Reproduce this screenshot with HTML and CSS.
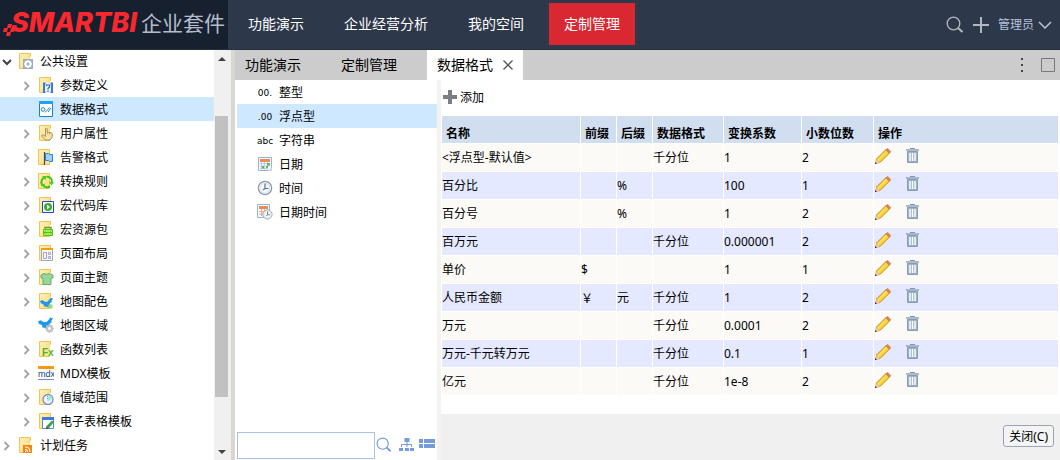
FILE: index.html
```html
<!DOCTYPE html>
<html lang="zh-CN">
<head>
<meta charset="utf-8">
<title>数据格式</title>
<link rel="stylesheet" href="styles.css">
</head>
<body>
<svg class="sprite" aria-hidden="true">
  <defs>
    <linearGradient id="paper" x1="0" y1="0" x2="1" y2="1"><stop offset="0" stop-color="#fff0b8"/><stop offset="1" stop-color="#ffdc7c"/></linearGradient>
    <symbol id="folder" viewBox="0 0 16 16"><path d="M1.5.5h11v3h-1v12h-10z" fill="url(#paper)" stroke="#ecc755"/><path d="M10 1h2v14h-2z" fill="#ffe08a"/></symbol>
    <symbol id="right" viewBox="0 0 10 10"><path d="M2.5 1l4 4-4 4" fill="none" stroke="#a3a3a3" stroke-width="1.8"/></symbol>
    <symbol id="down" viewBox="0 0 10 10"><path d="M1 3l4 4 4-4" fill="none" stroke="#404040" stroke-width="2"/></symbol>
    <symbol id="settings" viewBox="0 0 16 16"><use href="#folder"/><path d="M5 6h10v10H5z" fill="#9aaec6"/><circle cx="10" cy="11" r="2.5" fill="none" stroke="#fff" stroke-width="2"/><path d="M10 7v1.5M10 13.500V15M6 11h1.500M12.500 11H14M7.200 8.200l1 1M11.800 12.800l1 1M12.800 8.200l-1 1M8.200 12.800l-1 1" stroke="#fff" stroke-width="1.500"/></symbol>
    <symbol id="param" viewBox="0 0 16 16"><use href="#folder"/><path d="M5 6h10v10H5z" fill="#e9f1fb"/><path d="M7.500 6.500H6v9h1.500M12.500 6.500H14v9h-1.500" fill="none" stroke="#3b7bdd" stroke-width="2"/><path d="M8.500 9V8h3v2L10 11.500v1M10 13.500V15" fill="none" stroke="#2c62c4" stroke-width="1.200"/></symbol>
    <symbol id="format" viewBox="0 0 16 16"><path d="M1.500.5h13v15h-13z" fill="#fff" stroke="#0d87d4"/><path d="M1 0h14v3H1z" fill="#21a2ee"/><circle cx="5" cy="8.500" r="1.800" fill="none" stroke="#287fba"/><path d="M7 11.500l4.500-5M10 11l3-4" stroke="#287fba" fill="none"/></symbol>
    <symbol id="hand" viewBox="0 0 16 16"><use href="#folder"/><path d="M7.500 10V3.500q1-1 1.700 0V7l4 .8q1.500.5 1.200 2.200l-.6 3-1.800 2H7.500L3.500 11q.3-1.700 2-1l2 1.500z" fill="#f6e2ae" stroke="#ad9354"/><path d="M9.500 7v2M11.500 7.500v2" stroke="#ad9354" stroke-width=".7"/></symbol>
    <symbol id="flag" viewBox="0 0 16 16"><path d="M.5.500h11v15H.5z" fill="url(#paper)" stroke="#ecc755"/><path d="M6.500 3v13" stroke="#4c4646" stroke-width="1.200"/><path d="M7.500 4.500h3l1 1h3v7h-3l-1-1h-3z" fill="#a0d2ff" stroke="#2482ed"/></symbol>
    <symbol id="convert" viewBox="0 0 16 16"><path d="M.5.500h11v15H.5z" fill="url(#paper)" stroke="#ecc755"/><path d="M4.500 12.500Q1.500 8 6 4.500M9 3.500Q15 5 13.500 9.500M12 13Q9.500 15.500 6.500 13.500" fill="none" stroke="#3fc21b" stroke-width="2"/><path d="M4 3h5L7.500 7zM11 9h5l-2.500 3.500zM7 10.500V15l-4-2.500z" fill="#4ace20"/></symbol>
    <symbol id="code" viewBox="0 0 16 16"><use href="#folder"/><path d="M4.500 4.500h11v11h-11z" fill="#fff" stroke="#2545d4"/><circle cx="10" cy="10" r="4" fill="#37ad2f"/><path d="M9 7.500L12 10l-3 2.500z" fill="#fff"/></symbol>
    <symbol id="bag" viewBox="0 0 16 16"><use href="#folder"/><path d="M7 8.500V6.500h6v2" fill="none" stroke="#58a61f" stroke-width="1.300"/><path d="M5.500 8.500h9v6h-9z" fill="#9bf254" stroke="#5dbb20"/><path d="M5 11.500h10M7.500 10.500v2M12.500 10.500v2" stroke="#5dbb20"/></symbol>
    <symbol id="layout" viewBox="0 0 16 16"><use href="#folder"/><path d="M3.500 3.500h11v12h-11z" fill="#f7f8fc" stroke="#99a8c2"/><path d="M3 3h12v2H3z" fill="#ff9c14"/><path d="M5.500 7.500h3v6h-3zM10.500 7.500h2v2h-2zM10.500 11.500h2v2h-2z" fill="none" stroke="#a7a2c4"/></symbol>
    <symbol id="shirt" viewBox="0 0 16 16"><use href="#folder"/><path d="M3 6l3-1.500q3 1.500 5 0L15 6v3h-2v6.500H5V9H3z" fill="#98d49b" stroke="#62af70"/></symbol>
    <symbol id="china" viewBox="0 0 16 12"><path d="M0 4l3-1 3 2h3l2-2 2-3 3 1-2 3 1 1-3 2 1 3-3 2-3-1H5L4 8 1 7z" fill="#2298ea"/></symbol>
    <symbol id="mapcolor" viewBox="0 0 16 16"><use href="#folder"/><use href="#china" x="2" y="4" width="13" height="11"/><path d="M10.500 11.500h4v4h-4z" fill="#9bd977"/></symbol>
    <symbol id="maparea" viewBox="0 0 16 16"><use href="#china" y="0" width="15" height="12"/><circle cx="11.500" cy="11.500" r="2.500" fill="#fff" stroke="#c0c0c7" stroke-width="2"/><path d="M11.500 7v2M11.500 14v2M7 11.500h2M14 11.500h2M8.500 8.500l1 1M13.500 13.500l1 1M14.500 8.500l-1 1M8.500 14.500l1-1" stroke="#c0c0c7" stroke-width="1.500"/></symbol>
    <symbol id="fx" viewBox="0 0 16 16"><use href="#folder"/><text x="4" y="15" class="fx-letters">Fx</text></symbol>
    <symbol id="mdx" viewBox="0 0 16 16"><path d="M0 1h16v3H0z" fill="#ff980d"/><path d="M0 14.500h16" stroke="#7190bb"/><text x="0" y="12" class="mdx-letters">mdx</text></symbol>
    <symbol id="range" viewBox="0 0 16 16"><use href="#folder"/><circle cx="10" cy="10.500" r="5" fill="#f2faff" stroke="#6c91d1" stroke-width="1.300"/><path d="M10 10.500V6a4.500 4.500 0 0 1 4.500 4.500z" fill="#a6e9d0"/><path d="M9.500 7v4h4" stroke="#6c91d1" stroke-dasharray="1 1" fill="none"/></symbol>
    <symbol id="sheet" viewBox="0 0 16 16"><use href="#folder"/><path d="M4.500 4.500h11v11h-11z" fill="#fff" stroke="#5b87da"/><path d="M4 4h12v3H4z" fill="#3d78df"/><path d="M14 7.500l2 1.500-5 6-3 1 .5-3z" fill="#3ba34b"/><path d="M8 16l.5-2.500 2 2z" fill="#28603b"/></symbol>
    <symbol id="rss" viewBox="0 0 16 16"><use href="#folder"/><path d="M5 8h9v8H5z" fill="#f5860b"/><path d="M7 10q5 0 5 5M7 12.500q2.500 0 2.500 2.500" fill="none" stroke="#fff" stroke-width="1.200"/><path d="M7 14h1v1H7z" fill="#fff"/></symbol>
    <symbol id="search" viewBox="0 0 18 18"><circle cx="7.500" cy="7.500" r="6.300" fill="none" stroke="currentColor" stroke-width="1.300"/><path d="M12 12l4.500 4" stroke="currentColor" stroke-width="2"/></symbol>
    <symbol id="date" viewBox="0 0 16 16"><path d="M1.500 1.500h13v13h-13z" fill="#f7fbff" stroke="#94b4d5"/><path d="M3 3h10v3H3z" fill="#ef8a54"/><path d="M3 7.500h10M3 10h10M3 12.500h7M4.500 6v8M7.500 6v8M10.500 6v8" stroke="#b3c7dd" stroke-width=".8"/><path d="M10 7h3v2.500h-3zM5 10h2v2.500H5zM9 10h2v2H9z" fill="#64b35e"/><path d="M11 15l4-4v4z" fill="#bed6ee"/></symbol>
    <symbol id="clock" viewBox="0 0 16 16"><circle cx="8" cy="8" r="6.700" fill="#f5f8fb" stroke="#8c9aa8" stroke-width="1.200"/><circle cx="8" cy="8" r="5" fill="none" stroke="#d4dfe8"/><path d="M8 3.500v5h3.500M8 8.500l-2 1.500" fill="none" stroke="#617183" stroke-width="1.200"/></symbol>
    <symbol id="datetime" viewBox="0 0 16 16"><path d="M.5.500h12v13H.5z" fill="#f7fbff" stroke="#94b4d5"/><path d="M2 2h9v3H2z" fill="#ef8a54"/><path d="M2 7.500h9M2 10h9M4.500 5v7M7.500 5v7" stroke="#e8aa8d"/><use href="#clock" x="5" y="5" width="11" height="11"/></symbol>
    <symbol id="pencil" viewBox="0 0 16 16"><path d="M1.500 11L11.500 1l3.500 3.500-10 10L1 15z" fill="#fad43a" stroke="#b98a1c"/><path d="M3 12L12 3" stroke="#ffe979"/><path d="M10.500 2L12.500 0l3.500 3.500-2 2z" fill="#dd7d50"/><path d="M1.500 11L5 14.500.500 15.500z" fill="#f2c29c"/><path d="M0 14l2 2H0z" fill="#443528"/></symbol>
    <symbol id="trash" viewBox="0 0 16 16"><path d="M5 .5h5" stroke="#8299b2"/><path d="M1 2h13" stroke="#8299b2" stroke-width="1.300"/><path d="M2.500 3.500h10v11h-10z" fill="#9eb3ca" stroke="#839cb8"/><path d="M5 5v8M7.500 5v8M10 5v8" stroke="#fff" stroke-width="1.400"/></symbol>
  </defs>
</svg>
<div class="app">
  <header class="topbar">
    <div class="brand">
      <svg class="brand-mark" viewBox="0 0 12 12" aria-hidden="true"><path d="M5 0h4L8 4H4zM1 4h4L4 8H0zM8 4h4l-1 4H7zM4 8h4l-1 4H3z" fill="#f9282f"/></svg>
      <span class="brand-name">SMARTBI</span><span class="brand-suite">企业套件</span>
    </div>
    <nav class="main-nav">
      <a href="#">功能演示</a><a href="#">企业经营分析</a><a href="#">我的空间</a><a href="#" class="current">定制管理</a>
    </nav>
    <div class="user-tools">
      <button aria-label="搜索"><svg class="icon-search"><use href="#search"/></svg></button>
      <button aria-label="新建"><svg class="icon-new" viewBox="0 0 16 16"><path d="M8 0v16M0 8h16" stroke="currentColor" stroke-width="2"/></svg></button>
      <button class="user">管理员<svg class="icon-caret" viewBox="0 0 14 8"><path d="M1 1l6 6 6-6" fill="none" stroke="currentColor" stroke-width="1.500"/></svg></button>
    </div>
  </header>
  <div class="workspace">
    <aside class="sidebar">
      <ul class="tree">
        <li class="root"><svg class="arrow"><use href="#down"/></svg><svg class="icon"><use href="#settings"/></svg>公共设置</li>
        <li><svg class="arrow"><use href="#right"/></svg><svg class="icon"><use href="#param"/></svg>参数定义</li>
        <li class="selected"><svg class="arrow"></svg><svg class="icon"><use href="#format"/></svg>数据格式</li>
        <li><svg class="arrow"><use href="#right"/></svg><svg class="icon"><use href="#hand"/></svg>用户属性</li>
        <li><svg class="arrow"><use href="#right"/></svg><svg class="icon"><use href="#flag"/></svg>告警格式</li>
        <li><svg class="arrow"><use href="#right"/></svg><svg class="icon"><use href="#convert"/></svg>转换规则</li>
        <li><svg class="arrow"><use href="#right"/></svg><svg class="icon"><use href="#code"/></svg>宏代码库</li>
        <li><svg class="arrow"><use href="#right"/></svg><svg class="icon"><use href="#bag"/></svg>宏资源包</li>
        <li><svg class="arrow"><use href="#right"/></svg><svg class="icon"><use href="#layout"/></svg>页面布局</li>
        <li><svg class="arrow"><use href="#right"/></svg><svg class="icon"><use href="#shirt"/></svg>页面主题</li>
        <li><svg class="arrow"><use href="#right"/></svg><svg class="icon"><use href="#mapcolor"/></svg>地图配色</li>
        <li><svg class="arrow"></svg><svg class="icon"><use href="#maparea"/></svg>地图区域</li>
        <li><svg class="arrow"><use href="#right"/></svg><svg class="icon"><use href="#fx"/></svg>函数列表</li>
        <li><svg class="arrow"><use href="#right"/></svg><svg class="icon"><use href="#mdx"/></svg>MDX模板</li>
        <li><svg class="arrow"><use href="#right"/></svg><svg class="icon"><use href="#range"/></svg>值域范围</li>
        <li><svg class="arrow"><use href="#right"/></svg><svg class="icon"><use href="#sheet"/></svg>电子表格模板</li>
        <li class="root"><svg class="arrow"><use href="#right"/></svg><svg class="icon"><use href="#rss"/></svg>计划任务</li>
      </ul>
      <div class="scrollbar" aria-hidden="true">
        <svg viewBox="0 0 8 4"><path d="M0 4l4-4 4 4z"/></svg>
        <div class="track"><div class="thumb"></div></div>
        <svg viewBox="0 0 8 4"><path d="M0 0l4 4 4-4z"/></svg>
      </div>
    </aside>
    <main class="content">
      <div class="tabs">
        <button class="tab">功能演示</button><button class="tab">定制管理</button><button class="tab active">数据格式<svg class="close" viewBox="0 0 10 10"><path d="M.5.500l9 9M9.500.500l-9 9" stroke="#555" stroke-width="1.300"/></svg></button>
        <div class="tab-tools">
          <button aria-label="更多"><svg class="dots" viewBox="0 0 2 14"><path d="M0 0h2v2H0zM0 6h2v2H0zM0 12h2v2H0z" fill="#444"/></svg></button>
          <button aria-label="最大化"><svg class="maximize" viewBox="0 0 14 14"><path d="M.5.500h13v13H.5z" fill="none" stroke="#777"/></svg></button>
        </div>
      </div>
      <div class="panes">
        <section class="types">
          <ul class="type-list">
            <li><span class="glyph">00.</span>整型</li>
            <li class="selected"><span class="glyph">.00</span>浮点型</li>
            <li><span class="glyph abc">abc</span>字符串</li>
            <li><svg class="icon"><use href="#date"/></svg>日期</li>
            <li><svg class="icon"><use href="#clock"/></svg>时间</li>
            <li><svg class="icon"><use href="#datetime"/></svg>日期时间</li>
          </ul>
          <div class="finder">
            <input type="text" aria-label="查找">
            <button aria-label="查找"><svg class="icon"><use href="#search"/></svg></button>
            <button aria-label="树形"><svg class="icon" viewBox="0 0 16 16"><path d="M5.500 1h5v4h-5zM0 11h4v3H0zM6 11h4v3H6zM11 11h4v3h-4z" fill="#759bdb"/><path d="M8 5v5M2.500 10V7.500h10V10" fill="none" stroke="#759bdb"/></svg></button>
            <button aria-label="列表"><svg class="icon" viewBox="0 0 16 16"><path d="M0 2h4v4H0zM5 2h11v4H5zM0 7h4v4H0zM5 7h11v4H5z" fill="#759bdb"/></svg></button>
          </div>
        </section>
        <section class="formats">
          <div class="format-body">
            <button class="add"><svg class="plus" viewBox="0 0 14 14"><path d="M7 0v14M0 7h14" stroke="#7a7d83" stroke-width="4"/></svg>添加</button>
            <table>
              <colgroup><col class="c-name"><col class="c-affix"><col class="c-affix"><col class="c-format"><col class="c-factor"><col class="c-digits"><col></colgroup>
              <thead><tr><th>名称</th><th>前缀</th><th>后缀</th><th>数据格式</th><th>变换系数</th><th>小数位数</th><th>操作</th></tr></thead>
              <tbody>
                <tr><td>&lt;浮点型-默认值&gt;</td><td></td><td></td><td>千分位</td><td>1</td><td>2</td><td><div class="actions"><button aria-label="编辑"><svg class="icon"><use href="#pencil"/></svg></button><button aria-label="删除"><svg class="icon"><use href="#trash"/></svg></button></div></td></tr>
                <tr><td>百分比</td><td></td><td>%</td><td></td><td>100</td><td>1</td><td><div class="actions"><button aria-label="编辑"><svg class="icon"><use href="#pencil"/></svg></button><button aria-label="删除"><svg class="icon"><use href="#trash"/></svg></button></div></td></tr>
                <tr><td>百分号</td><td></td><td>%</td><td></td><td>1</td><td>2</td><td><div class="actions"><button aria-label="编辑"><svg class="icon"><use href="#pencil"/></svg></button><button aria-label="删除"><svg class="icon"><use href="#trash"/></svg></button></div></td></tr>
                <tr><td>百万元</td><td></td><td></td><td>千分位</td><td>0.000001</td><td>2</td><td><div class="actions"><button aria-label="编辑"><svg class="icon"><use href="#pencil"/></svg></button><button aria-label="删除"><svg class="icon"><use href="#trash"/></svg></button></div></td></tr>
                <tr><td>单价</td><td>$</td><td></td><td></td><td>1</td><td>1</td><td><div class="actions"><button aria-label="编辑"><svg class="icon"><use href="#pencil"/></svg></button><button aria-label="删除"><svg class="icon"><use href="#trash"/></svg></button></div></td></tr>
                <tr><td>人民币金额</td><td class="wide">￥</td><td>元</td><td>千分位</td><td>1</td><td>2</td><td><div class="actions"><button aria-label="编辑"><svg class="icon"><use href="#pencil"/></svg></button><button aria-label="删除"><svg class="icon"><use href="#trash"/></svg></button></div></td></tr>
                <tr><td>万元</td><td></td><td></td><td>千分位</td><td>0.0001</td><td>2</td><td><div class="actions"><button aria-label="编辑"><svg class="icon"><use href="#pencil"/></svg></button><button aria-label="删除"><svg class="icon"><use href="#trash"/></svg></button></div></td></tr>
                <tr><td>万元-千元转万元</td><td></td><td></td><td>千分位</td><td>0.1</td><td>1</td><td><div class="actions"><button aria-label="编辑"><svg class="icon"><use href="#pencil"/></svg></button><button aria-label="删除"><svg class="icon"><use href="#trash"/></svg></button></div></td></tr>
                <tr><td>亿元</td><td></td><td></td><td>千分位</td><td>1e-8</td><td>2</td><td><div class="actions"><button aria-label="编辑"><svg class="icon"><use href="#pencil"/></svg></button><button aria-label="删除"><svg class="icon"><use href="#trash"/></svg></button></div></td></tr>
              </tbody>
            </table>
          </div>
          <footer class="footer"><button class="dismiss">关闭(C)</button></footer>
        </section>
      </div>
    </main>
  </div>
</div>
</body>
</html>
```

FILE: styles.css
```css
* { box-sizing: border-box; }
body { margin: 0; background: #fff; color: #000; font: 12px/24px "Noto Sans", "Noto Sans CJK SC", sans-serif; }
button { display: flex; align-items: center; margin: 0; padding: 0; border: 0; background: none; color: inherit; font: inherit; white-space: nowrap; }
ul { margin: 0; padding: 0; list-style: none; }
svg { display: block; flex: none; }
.sprite { position: absolute; width: 0; height: 0; }
.icon { width: 16px; height: 16px; }
.fx-letters { font: bold 10px "Liberation Sans", sans-serif; fill: #43b832; }
.mdx-letters { font: 9px "Liberation Sans", sans-serif; fill: #123f87; }

.app { display: flex; flex-direction: column; height: 100vh; }
.topbar { display: flex; flex: none; height: 50px; background: #2e384b; border-bottom: 1px solid #252e40; }
.brand { display: flex; align-items: center; width: 228px; padding: 0 0 3px 3px; background: #17202e; line-height: 44px; white-space: nowrap; }
.brand-mark { width: 12px; height: 12px; align-self: flex-end; margin-bottom: 10px; }
.brand-name { width: 126px; margin-left: -4px; color: #f9282f; font: italic 800 27px/44px Inter, sans-serif; }
.brand-suite { margin-left: 4px; color: #b3bccd; font-size: 21px; }
.main-nav { display: flex; gap: 10px; padding: 3px 5px; }
.main-nav a { height: 42px; padding: 0 15px; color: #fff; font-size: 14px; line-height: 42px; text-decoration: none; }
.main-nav .current { background: #d92831; }
.user-tools { display: flex; align-items: center; gap: 9px; margin-left: auto; padding-right: 8px; color: #b5b7be; }
.icon-search { width: 18px; height: 18px; }
.icon-new { width: 16px; height: 16px; }
.user { gap: 4px; color: #b6c3da; }
.icon-caret { width: 14px; height: 8px; }

.workspace { display: flex; flex: 1; min-height: 0; }
.sidebar { display: flex; flex: none; width: 235px; overflow: hidden; border-right: 4px solid #dad7d0; }
.tree { flex: 1; margin-top: -1px; }
.tree li { display: flex; align-items: center; height: 24px; padding: 2px 0 0 22px; white-space: nowrap; }
.tree .root { padding-left: 2px; }
.tree .icon { margin: 0 6px 2px 6px; }
.tree .arrow { width: 10px; height: 10px; }
.selected { background: #cde8ff; }
.scrollbar { display: flex; flex-direction: column; align-items: center; width: 17px; padding: 7px 2px 6px 0; background: #f0f0f0; }
.scrollbar svg { width: 8px; height: 4px; fill: #404040; }
.track { flex: 1; width: 13px; padding-top: 55px; }
.thumb { height: 84%; background: #c1c1c1; }

.content { display: flex; flex: 1; flex-direction: column; min-width: 0; }
.tabs { display: flex; flex: none; height: 30px; background: #ccc; }
.tab { width: 96px; padding: 0 10px; font-size: 14px; }
.active { background: #fff; }
.close { width: 10px; height: 10px; margin-left: 10px; }
.tab-tools { display: flex; align-items: center; gap: 18px; margin-left: auto; padding-right: 5px; }
.dots { width: 2px; height: 14px; }
.maximize { width: 14px; height: 14px; }
.panes { display: flex; flex: 1; min-height: 0; }
.types { display: flex; flex: none; flex-direction: column; justify-content: space-between; width: 206px; padding: 0 0 1px 2px; border-right: 4px solid #f4f3f1; }
.type-list li { display: flex; align-items: center; gap: 6px; height: 24px; padding: 2px 0 0 20px; }
.type-list .icon { margin-bottom: 2px; }
.glyph { width: 16px; font: 9px/16px "DejaVu Sans", sans-serif; text-align: center; }
.finder { display: flex; align-items: center; gap: 5px; padding-right: 2px; }
.finder input { flex: 1; min-width: 0; height: 27px; margin-right: -4px; border: 1px solid #a9c1e6; }
.finder button { padding-bottom: 2px; color: #759bdb; }
.finder button:nth-of-type(1) { margin-right: 2px; }
.finder button:nth-of-type(2) { margin-right: -1px; }

.formats { display: flex; flex: 1; flex-direction: column; min-width: 0; }
.format-body { flex: 1; padding: 5px 2px 0 1px; }
.add { gap: 3px; height: 26px; margin: 0 1px 5px; }
.plus { width: 14px; height: 14px; margin-bottom: 2px; }
table { width: 100%; table-layout: fixed; border-collapse: separate; border-spacing: 0; }
th, td { height: 28px; padding: 0; border-right: 1px solid #fff; border-bottom: 1px solid #fff; text-align: left; line-height: 18px; white-space: nowrap; }
th:last-child, td:last-child { border-right: 0; }
th { padding: 9px 0 0 4px; background: #d0def0; }
td { background: #fbfaf6; }
tr:nth-child(even) td { background: #e5e9ff; }
.c-name { width: 139px; }
.c-affix { width: 36px; }
.c-format { width: 71px; }
.c-factor { width: 78px; }
.c-digits { width: 72px; }
.wide { font-family: "Noto Sans CJK SC", sans-serif; }
.actions { display: flex; gap: 14px; padding: 0 0 3px 1px; }
.footer { display: flex; flex: none; justify-content: flex-end; height: 46px; padding: 11px 6px; background: #f0f0f0; }
.dismiss { height: 22px; padding: 1px 5px 0; border: 1px solid #99a5b6; border-radius: 3px; background: #f4f4f4; }
```
